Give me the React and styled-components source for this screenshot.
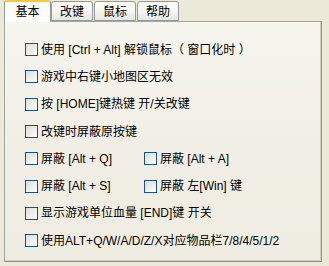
import React from "react";
import styled, { createGlobalStyle } from "styled-components";

const GlobalStyle = createGlobalStyle`
  html, body {
    margin: 0;
    padding: 0;
    background: #ece9d8;
  }
  body {
    font-family: Tahoma, "Liberation Sans", "Noto Sans CJK SC", sans-serif;
    font-size: 12px;
    color: #000;
  }
`;

const tabs = ["基本", "改键", "鼠标", "帮助"];

const rows = [
  ["使用 [Ctrl + Alt] 解锁鼠标（ 窗口化时 ）"],
  ["游戏中右键小地图区无效"],
  ["按 [HOME]键热键 开/关改键"],
  ["改键时屏蔽原按键"],
  ["屏蔽 [Alt + Q]", "屏蔽 [Alt + A]"],
  ["屏蔽 [Alt + S]", "屏蔽 左[Win] 键"],
  ["显示游戏单位血量 [END]键 开关"],
  ["使用ALT+Q/W/A/D/Z/X对应物品栏7/8/4/5/1/2"],
];

function App() {
  return (
    <>
      <GlobalStyle />
      <Window>
        <TabStrip>
          {tabs.map((t, i) => (
            <Tab key={t} $active={i === 0}>
              {t}
            </Tab>
          ))}
        </TabStrip>
        <Panel>
          {rows.map((cols, i) => (
            <Row key={i}>
              {cols.map((label) => (
                <Option key={label}>
                  <Box />
                  <Label>{label}</Label>
                </Option>
              ))}
            </Row>
          ))}
        </Panel>
      </Window>
    </>
  );
}

export default App;

const Window = styled.div`
  width: 320px;
  padding-left: 4px;
`;

const TabStrip = styled.div`
  display: flex;
  align-items: flex-end;
  height: 22px;
  position: relative;
  z-index: 2;
  margin-bottom: -1px;
`;

const Tab = styled.div`
  box-sizing: border-box;
  display: flex;
  align-items: center;
  justify-content: center;
  width: ${(p) => (p.$active ? "47px" : "42px")};
  height: ${(p) => (p.$active ? "22px" : "20px")};
  margin-right: ${(p) => (p.$active ? "0" : "1px")};
  margin-bottom: ${(p) => (p.$active ? "0" : "1px")};
  padding-bottom: ${(p) => (p.$active ? "3px" : "1px")};
  border: 1px solid #919b9c;
  border-bottom: ${(p) => (p.$active ? "none" : "1px solid #919b9c")};
  border-top: ${(p) => (p.$active ? "2px solid #ffc83c" : "1px solid #919b9c")};
  border-radius: 3px 3px 0 0;
  background: ${(p) =>
    p.$active
      ? "#fcfcf8"
      : "linear-gradient(#ffffff, #f3f3ef 60%, #e6e5df)"};
  font-size: 12px;
`;

const Panel = styled.div`
  box-sizing: border-box;
  width: 318px;
  height: 241px;
  border: 1px solid #a0a6a6;
  border-right-color: #8c9497;
  border-bottom-color: #8c9497;
  box-shadow: inset -1px -1px 0 #d0cec4;
  background: linear-gradient(#f6f5ee, #f1efe5 50%, #efede2);
  padding: 14px 0 0 20px;
  display: flex;
  flex-direction: column;
`;

const Row = styled.div`
  display: grid;
  grid-template-columns: 119px auto;
  height: 27.3px;
  align-items: center;
`;

const Option = styled.div`
  display: flex;
  align-items: center;
  gap: 3px;
  white-space: nowrap;
`;

const Box = styled.span`
  box-sizing: border-box;
  width: 13px;
  height: 13px;
  flex: none;
  border: 1px solid #1c5180;
  background: linear-gradient(135deg, #dcdcd7, #ffffff);
`;

const Label = styled.span`
  font-size: 12px;
  line-height: 14px;
`;
